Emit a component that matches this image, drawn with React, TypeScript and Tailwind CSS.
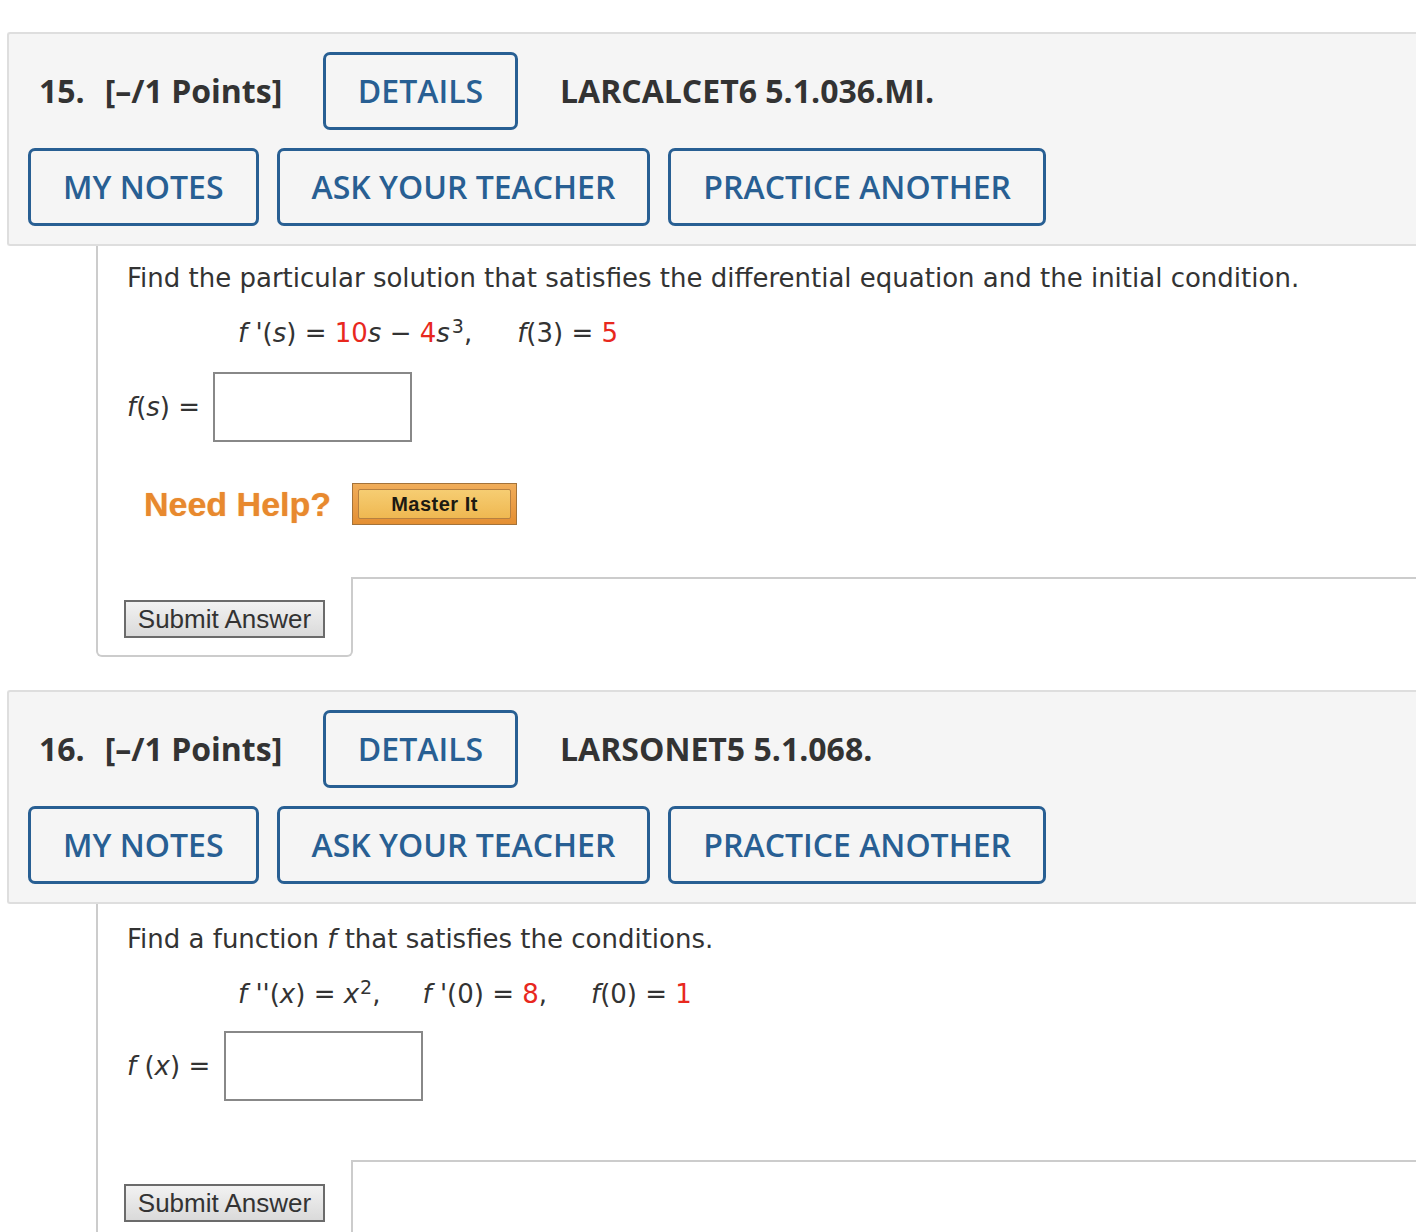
import React from "react";

const body = "font-['DejaVu_Sans',Verdana,sans-serif]";

function Header({ num, code }: { num: string; code: string }) {
  return (
    <div className="ml-[7px] bg-[#f5f5f5] border-2 border-r-0 border-[#dedede] rounded-l-[3px] px-[19px] py-[18px] font-['Open_Sans',sans-serif]">
      <div className="flex items-center h-[78px]">
        <div className="pl-[11px] w-[295px] text-[32px] font-bold text-[#333] leading-none">
          <span>{num}.</span>
          <span className="ml-[20px]">[–/1 Points]</span>
        </div>
        <button className="h-[78px] w-[195px] border-[3px] border-[#285f93] rounded-[7px] text-[32px] font-semibold text-[#285f93]">
          DETAILS
        </button>
        <div className="ml-[42px] text-[32px] font-bold text-[#333] leading-none">
          {code}
        </div>
      </div>
      <div className="flex gap-[18px] mt-[18px]">
        {["MY NOTES", "ASK YOUR TEACHER", "PRACTICE ANOTHER"].map((t) => (
          <button
            key={t}
            className="h-[78px] px-[32px] border-[3px] border-[#285f93] rounded-[7px] text-[32px] font-semibold text-[#285f93] leading-none"
          >
            {t}
          </button>
        ))}
      </div>
    </div>
  );
}

function MasterIt() {
  return (
    <div className="w-[165px] h-[42px] border border-[#a4733a] bg-gradient-to-b from-[#f0ad5a] to-[#e48f32] p-[5px]">
      <div className="h-full border border-[#b78040] rounded-[2px] bg-gradient-to-b from-[#f6cd72] to-[#efb851] flex items-center justify-center font-['Liberation_Sans',Arial,sans-serif] font-bold text-[20px] tracking-[0.5px] text-[#1d1a12]">
        Master It
      </div>
    </div>
  );
}

function SubmitRow({ pt }: { pt: string }) {
  return (
    <div className="flex">
      <div className={`w-[257px] h-[80px] border-l-2 border-r-2 border-b-2 border-[#cccccc] rounded-b-[6px] pl-[26px] ${pt}`}>
        <button className="w-[201px] h-[38px] border-2 border-[#6b6b6b] bg-gradient-to-b from-[#f2f2f2] to-[#dadada] font-['Liberation_Sans',Arial,sans-serif] text-[26px] text-[#333] leading-none">
          Submit Answer
        </button>
      </div>
      <div className="flex-1 border-t-2 border-[#cccccc]" />
    </div>
  );
}

const red = "text-[#e8281e]";

export default function App() {
  return (
    <div className={`bg-white min-h-[1232px] w-[1416px] overflow-hidden pt-[32px] ${body}`}>
      {/* Question 15 */}
      <Header num="15" code="LARCALCET6 5.1.036.MI." />
      <div className="ml-[96px]">
        <div className="border-l-2 border-[#cccccc] pl-[29px] pt-[16px] pb-[52px] text-[26px] text-[#333]">
          <p className="leading-[32px]">
            Find the particular solution that satisfies the differential equation and the initial condition.
          </p>
          <p className="mt-[23px] ml-[111px] leading-[32px] whitespace-pre">
            <i>f</i> '(<i>s</i>) = <span className={red}>10</span>
            <i>s</i> − <span className={red}>4</span>
            <i>s</i>
            <sup className="text-[19px] ml-[2px]">3</sup>,
            <span className="inline-block w-[45px]" />
            <i>f</i>(3) = <span className={red}>5</span>
          </p>
          <div className="mt-[23px] flex items-center">
            <span className="w-[86px]">
              <i>f</i>(<i>s</i>) =
            </span>
            <div className="w-[199px] h-[70px] border-2 border-[#888]" />
          </div>
          <div className="mt-[41px] ml-[17px] flex items-center gap-[21px]">
            <span className="font-['Liberation_Sans',Arial,sans-serif] font-bold text-[34px] leading-[42px] text-[#e8892e] [text-shadow:0_0_1px_#f0b070]">
              Need Help?
            </span>
            <MasterIt />
          </div>
        </div>
        <SubmitRow pt="pt-[23px]" />
      </div>

      {/* Question 16 */}
      <div className="mt-[33px]">
        <Header num="16" code="LARSONET5 5.1.068." />
      </div>
      <div className="ml-[96px]">
        <div className="border-l-2 border-[#cccccc] pl-[29px] pt-[19px] pb-[59px] text-[26px] text-[#333]">
          <p className="leading-[32px]">
            Find a function <i>f</i> that satisfies the conditions.
          </p>
          <p className="mt-[23px] ml-[111px] leading-[32px] whitespace-pre">
            <i>f</i> ''(<i>x</i>) = <i>x</i>
            <sup className="text-[19px] ml-[1px]">2</sup>,
            <span className="inline-block w-[42px]" />
            <i>f</i> '(0) = <span className={red}>8</span>,
            <span className="inline-block w-[44px]" />
            <i>f</i>(0) = <span className={red}>1</span>
          </p>
          <div className="mt-[21px] flex items-center">
            <span className="w-[97px]">
              <i>f</i> (<i>x</i>) =
            </span>
            <div className="w-[199px] h-[70px] border-2 border-[#888]" />
          </div>
        </div>
        <SubmitRow pt="pt-[24px]" />
      </div>
    </div>
  );
}
